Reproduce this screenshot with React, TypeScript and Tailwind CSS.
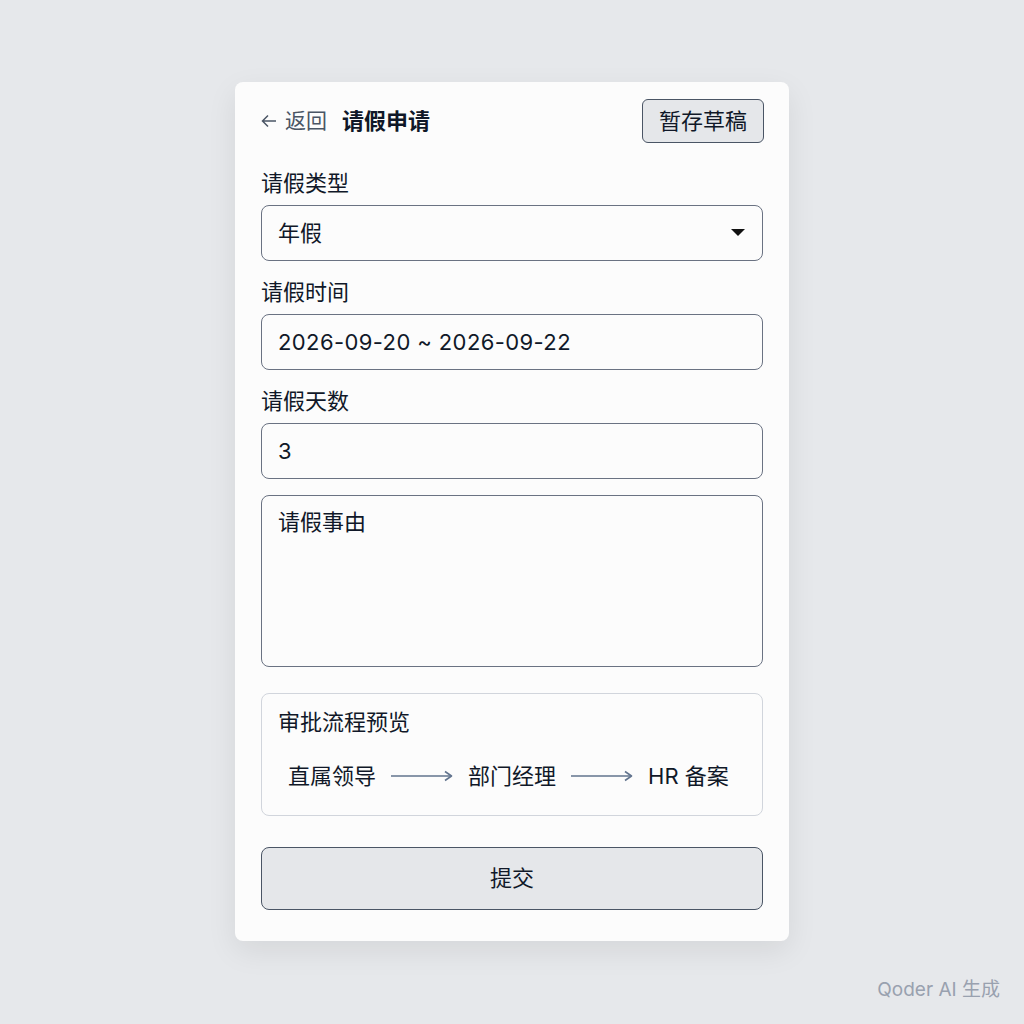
import React from 'react';

const font = { fontFamily: 'Inter, "Noto Sans CJK SC", sans-serif' };

function Arrow() {
  return (
    <svg width="64" height="12" viewBox="0 0 64 12" className="text-slate-500">
      <path d="M1 6H61" stroke="currentColor" strokeWidth="1.6" fill="none" />
      <path d="M55 1.5L61.5 6L55 10.5" stroke="currentColor" strokeWidth="1.6" fill="none" strokeLinejoin="round" />
    </svg>
  );
}

function Field({ label, children }: { label: string; children: React.ReactNode }) {
  return (
    <div className="flex flex-col gap-2">
      <div className="text-[22px] leading-7 text-gray-900">{label}</div>
      {children}
    </div>
  );
}

export default function App() {
  return (
    <div className="relative min-h-screen w-full bg-[#e6e8eb] flex justify-center pt-[82px]" style={font}>
      <div className="w-[554px] h-[859px] bg-[#fcfcfc] rounded-lg shadow-[0_10px_30px_rgba(0,0,0,0.08)] px-[26px] pt-[17px] pb-[31px] flex flex-col">
        <div className="flex items-center justify-between h-[44px]">
          <div className="flex items-center">
            <svg width="18" height="18" viewBox="0 0 18 18" className="text-gray-600 ml-[-1px]">
              <path d="M16 9H2.5M8 3.5L2.5 9L8 14.5" stroke="currentColor" strokeWidth="1.5" fill="none" />
            </svg>
            <span className="ml-[7px] text-[21px] text-gray-600">返回</span>
            <span className="ml-[15px] text-[22px] font-bold text-gray-900">请假申请</span>
          </div>
          <button className="h-[44px] w-[122px] rounded-md border border-gray-600 bg-[#e5e7ea] text-[22px] text-gray-900 mr-[-1px]">
            暂存草稿
          </button>
        </div>

        <div className="mt-[26px] flex flex-col gap-[17px]">
          <Field label="请假类型">
            <div className="h-[56px] rounded-lg border border-gray-500 flex items-center justify-between px-4 text-[22px] text-gray-900">
              <span>年假</span>
              <svg width="14" height="8" viewBox="0 0 14 8" className="mr-[1px]">
                <path d="M0 0H14L7 7Z" fill="#111" />
              </svg>
            </div>
          </Field>
          <Field label="请假时间">
            <div className="h-[56px] rounded-lg border border-gray-500 flex items-center px-4 text-[22px] tracking-[0.4px] text-gray-900">
              2026-09-20 ~ 2026-09-22
            </div>
          </Field>
          <Field label="请假天数">
            <div className="h-[56px] rounded-lg border border-gray-500 flex items-center px-4 text-[22px] text-gray-900">
              3
            </div>
          </Field>
        </div>

        <div className="mt-[16px] h-[172px] rounded-lg border border-gray-500 px-4 pt-[10px] text-[22px] text-gray-900">
          请假事由
        </div>

        <div className="mt-[26px] h-[124px] rounded-lg border border-gray-300 px-4 pt-[14px]">
          <div className="text-[22px] leading-7 text-gray-900">审批流程预览</div>
          <div className="mt-[24px] ml-[10px] flex items-center gap-[14px] text-[22px] text-gray-900">
            <span>直属领导</span>
            <Arrow />
            <span>部门经理</span>
            <Arrow />
            <span>HR 备案</span>
          </div>
        </div>

        <button className="mt-[31px] h-[63px] w-full rounded-lg border border-gray-600 bg-[#e5e7ea] text-[22px] text-gray-900">
          提交
        </button>
      </div>

      <div className="absolute right-[24px] bottom-[20px] text-[19px] text-gray-400">Qoder AI 生成</div>
    </div>
  );
}
